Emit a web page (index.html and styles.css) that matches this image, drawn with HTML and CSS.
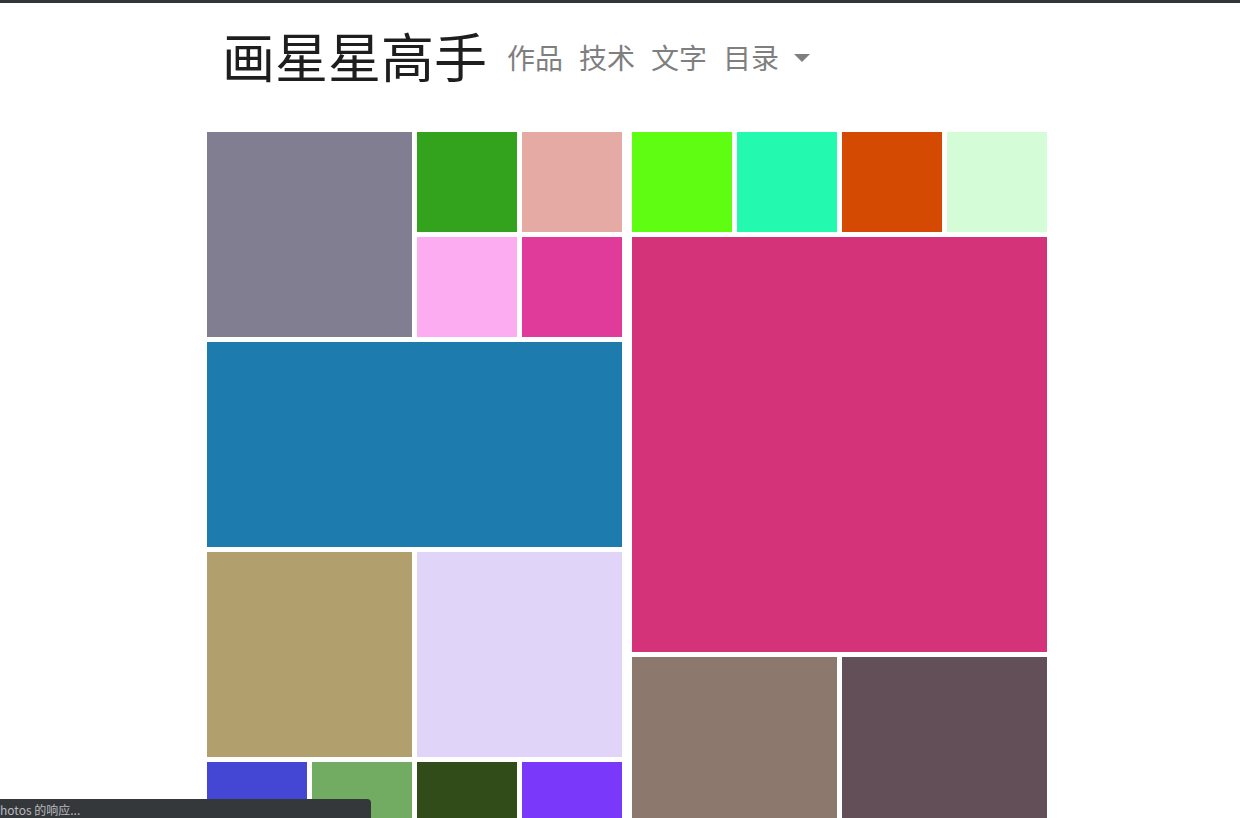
FILE: index.html
```html
<!DOCTYPE html>
<html lang="zh">
<head>
<meta charset="utf-8">
<title>画星星高手</title>
<link rel="stylesheet" href="styles.css">
</head>
<body>
<div class="page">
  <header class="header">
    <h1 class="title">画星星高手</h1>
    <nav class="nav">
      <a class="nav-link" href="#">作品</a>
      <a class="nav-link" href="#">技术</a>
      <a class="nav-link" href="#">文字</a>
      <a class="nav-link dropdown" href="#">目录 <span class="caret"></span></a>
    </nav>
  </header>
  <main class="mosaic">
    <section class="half">
      <div class="tile c-gray s2x2"></div>
      <div class="tile c-green"></div>
      <div class="tile c-salmon"></div>
      <div class="tile c-pinklight"></div>
      <div class="tile c-magenta"></div>
      <div class="tile c-blue s4x2"></div>
      <div class="tile c-beige s2x2"></div>
      <div class="tile c-lavender s2x2"></div>
      <div class="tile c-indigo"></div>
      <div class="tile c-leaf"></div>
      <div class="tile c-forest"></div>
      <div class="tile c-violet"></div>
      <div class="tile c-teal"></div>
      <div class="tile c-sand"></div>
      <div class="tile c-rose"></div>
      <div class="tile c-sky"></div>
    </section>
    <section class="half">
      <div class="tile c-lime"></div>
      <div class="tile c-aqua"></div>
      <div class="tile c-orange"></div>
      <div class="tile c-mint"></div>
      <div class="tile c-cerise s4x4"></div>
      <div class="tile c-taupe s2x2"></div>
      <div class="tile c-plum s2x2"></div>
      <div class="tile c-olive s2x1"></div>
      <div class="tile c-coral s2x1"></div>
    </section>
  </main>
</div>
<div class="status">hotos 的响应...</div>
</body>
</html>
```
FILE: styles.css
```css
html, body {
  margin: 0;
  padding: 0;
  background: #ffffff;
}
body {
  border-top: 3px solid #323639;
  font-family: "Noto Sans CJK SC", "Noto Sans", sans-serif;
}
.page {
  width: 840px;
  margin: 0 auto;
  padding-left: 14px;
}
.header {
  display: flex;
  align-items: flex-start;
  gap: 20px;
  padding: 14px 0 0 15px;
  height: 129px;
  box-sizing: border-box;
}
.title {
  margin: 0;
  font-size: 53px;
  font-weight: 400;
  line-height: 76px;
  color: #1e1e1e;
}
.nav {
  display: flex;
  align-items: center;
  gap: 16px;
  margin-top: 20px;
}
.nav-link {
  font-size: 28px;
  color: #7f7f7f;
  text-decoration: none;
  line-height: 40px;
}
.caret {
  display: inline-block;
  width: 0;
  height: 0;
  margin-left: 9px;
  border-left: 8px solid transparent;
  border-right: 8px solid transparent;
  border-top: 8px solid #7f7f7f;
  vertical-align: 7px;
}
.mosaic {
  display: flex;
  gap: 10px;
}
.half {
  display: grid;
  grid-template-columns: repeat(4, 100px);
  grid-auto-rows: 100px;
  gap: 5px;
  grid-auto-flow: dense;
}
.tile {
  box-sizing: border-box;
}
.s2x2 { grid-column: span 2; grid-row: span 2; }
.s4x2 { grid-column: span 4; grid-row: span 2; }
.s4x4 { grid-column: span 4; grid-row: span 4; }
.s2x1 { grid-column: span 2; }
.c-gray { background: #817e91; }
.c-green { background: #33a31d; }
.c-salmon { background: #e6aaa4; }
.c-pinklight { background: #fcadf2; }
.c-magenta { background: #e03a9a; }
.c-blue { background: #1e7bae; }
.c-beige { background: #b29f6e; }
.c-lavender { background: #e0d4f8; }
.c-indigo { background: #4347d3; }
.c-leaf { background: #72ac63; }
.c-forest { background: #314c19; }
.c-violet { background: #7a38fb; }
.c-teal { background: #3c8f8a; }
.c-sand { background: #d9c28a; }
.c-rose { background: #c4576e; }
.c-sky { background: #8cc4ea; }
.c-lime { background: #5efd12; }
.c-aqua { background: #24f9b0; }
.c-orange { background: #d44a02; }
.c-mint { background: #d4fcd7; }
.c-cerise { background: #d43379; }
.c-taupe { background: #8c786d; }
.c-plum { background: #634f57; }
.c-olive { background: #8a8f3a; }
.c-coral { background: #e48060; }
.status {
  position: fixed;
  left: 0;
  bottom: 0;
  width: 371px;
  height: 19px;
  background: #35383b;
  border-top-right-radius: 4px;
  color: #b7babd;
  font-size: 12px;
  line-height: 21px;
  white-space: nowrap;
  overflow: hidden;
  padding-left: 0;
}
```
